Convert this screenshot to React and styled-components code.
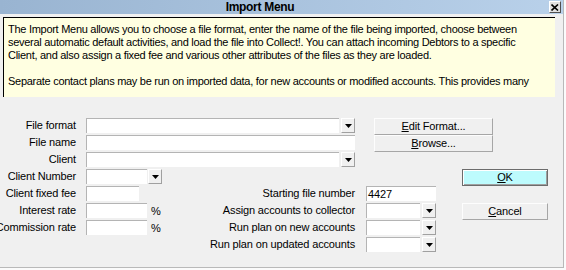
import React from "react";
import styled, { createGlobalStyle } from "styled-components";

const Global = createGlobalStyle`
  html, body { margin: 0; padding: 0; background: #fbfbfb; }
  body { font-family: "Liberation Sans", Arial, sans-serif; font-size: 11px; color: #000; }
`;

const Window = styled.div`
  width: 563px;
  height: 267px;
  background: #f0f0f0;
  border-right: 1px solid #b9b9b9;
  border-bottom: 1px solid #b9b9b9;
  display: flex;
  flex-direction: column;
  overflow: hidden;
`;

const TitleBar = styled.div`
  height: 14px;
  flex: none;
  display: flex;
  align-items: center;
  background: linear-gradient(to right, #99b4d1, #b9d1ea);
  padding-right: 2px;
`;

const Title = styled.div`
  flex: 1;
  text-align: center;
  font-weight: bold;
  font-size: 12px;
  letter-spacing: -0.3px;
  line-height: 14px;
  padding-right: 29px;
`;

const CloseBtn = styled.div`
  width: 10px;
  height: 10px;
  background: #e0e0e0;
  border: 1px solid;
  border-color: #fff #505050 #505050 #fff;
  display: flex;
  align-items: center;
  justify-content: center;
`;

const Info = styled.div`
  margin: 3px 0 0 3px;
  width: 552px;
  height: 80px;
  flex: none;
  background: #ffffe1;
  border-left: 1px solid #000;
  border-top: 1px solid #000;
  padding: 5px 0 0 4px;
  box-sizing: border-box;
  line-height: 13px;
  letter-spacing: -0.28px;
  overflow: hidden;
`;

const Para = styled.p`
  margin: 0 0 13px 0;
  white-space: nowrap;
`;

const Form = styled.div`
  margin-top: 21px;
  display: grid;
  grid-template-columns: 76px 10px 84px 185px 11px 70px 26px 86px;
  grid-auto-rows: 15px;
  row-gap: 2px;
  align-items: center;
  letter-spacing: -0.15px;
`;

const Label = styled.div`
  grid-column: ${(p) => p.$col || 1};
  grid-row: ${(p) => p.$row};
  text-align: right;
  white-space: nowrap;
  justify-self: end;
  line-height: 15px;
`;

const Field = styled.div`
  grid-column: ${(p) => p.$col};
  grid-row: ${(p) => p.$row};
  width: ${(p) => (p.$w ? p.$w + "px" : "auto")};
  height: 15px;
  box-sizing: border-box;
  background: #fff;
  border-top: 1px solid #b4b4b4;
  border-left: 1px solid #b4b4b4;
  padding-left: 1px;
  line-height: 14px;
  align-self: start;
`;

const Combo = styled.div`
  grid-column: ${(p) => p.$col};
  grid-row: ${(p) => p.$row};
  width: ${(p) => (p.$w ? p.$w + "px" : "auto")};
  height: 15px;
  display: flex;
  gap: ${(p) => p.$gap ?? 2}px;
  align-self: start;
`;

const ComboField = styled.div`
  flex: 1;
  background: #fff;
  border-top: 1px solid #b4b4b4;
  border-left: 1px solid #b4b4b4;
`;

const DropBtn = styled.div`
  width: 14px;
  box-sizing: border-box;
  background: #f0f0f0;
  border: 1px solid;
  border-color: #fff #a0a0a0 #a0a0a0 #fff;
  display: flex;
  align-items: center;
  justify-content: center;
`;

const Percent = styled.div`
  grid-column: ${(p) => p.$col};
  grid-row: ${(p) => p.$row};
  display: flex;
  align-items: center;
  gap: 4px;
  align-self: start;
  height: 15px;
`;

const Button = styled.div`
  grid-column: ${(p) => p.$col};
  grid-row: ${(p) => p.$row};
  margin-left: ${(p) => p.$ml || 0}px;
  width: ${(p) => p.$w}px;
  height: 17px;
  box-sizing: border-box;
  align-self: start;
  background: ${(p) => (p.$default ? "#bdfbfd" : "#f0f0f0")};
  border: 1px solid;
  border-color: ${(p) =>
    p.$default ? "#6c6c6c" : "#fdfdfd #a6a6a6 #a6a6a6 #fdfdfd"};
  box-shadow: ${(p) =>
    p.$default ? "inset 1px 1px #fff, inset -1px -1px #a0a0a0" : "none"};
  text-align: center;
  line-height: 15px;
  z-index: 1;
`;

const Down = () => (
  <svg width="7" height="4" viewBox="0 0 7 4">
    <path d="M0 0H7L3.5 4Z" fill="#000" />
  </svg>
);

const X = () => (
  <svg width="8" height="7" viewBox="0 0 8 7">
    <path d="M0.5 0.5L7 6.5M7 0.5L0.5 6.5" stroke="#000" strokeWidth="1.6" />
  </svg>
);

export default function App() {
  return (
    <>
      <Global />
      <Window>
        <TitleBar>
          <Title>Import Menu</Title>
          <CloseBtn>
            <X />
          </CloseBtn>
        </TitleBar>
        <Info>
          <Para>
            The Import Menu allows you to choose a file format, enter the name of the file being imported, choose between
            <br />
            several automatic default activities, and load the file into Collect!. You can attach incoming Debtors to a specific
            <br />
            Client, and also assign a fixed fee and various other attributes of the files as they are loaded.
          </Para>
          <Para>
            Separate contact plans may be run on imported data, for new accounts or modified accounts. This provides many
          </Para>
        </Info>
        <Form>
          <Label $row={1}>File format</Label>
          <Combo $row={1} $col="3 / 5">
            <ComboField />
            <DropBtn><Down /></DropBtn>
          </Combo>
          <Button $row={1} $col="6 / 9" $ml={8} $w={119}>
            <u>E</u>dit Format...
          </Button>

          <Label $row={2}>File name</Label>
          <Field $row={2} $col="3 / 5" />
          <Button $row={2} $col="6 / 9" $ml={8} $w={119}>
            <u>B</u>rowse...
          </Button>

          <Label $row={3}>Client</Label>
          <Combo $row={3} $col="3 / 5">
            <ComboField />
            <DropBtn><Down /></DropBtn>
          </Combo>

          <Label $row={4}>Client Number</Label>
          <Combo $row={4} $col="3" $w={76} $gap={1}>
            <ComboField />
            <DropBtn><Down /></DropBtn>
          </Combo>
          <Button $row={4} $col="8" $w={86} $default>
            <u>O</u>K
          </Button>

          <Label $row={5}>Client fixed fee</Label>
          <Field $row={5} $col="3" $w={53} />
          <Label $row={5} $col="4">Starting file number</Label>
          <Field $row={5} $col="6">4427</Field>

          <Label $row={6}>Interest rate</Label>
          <Percent $row={6} $col="3">
            <Field $w={61} />%
          </Percent>
          <Label $row={6} $col="4">Assign accounts to collector</Label>
          <Combo $row={6} $col="6">
            <ComboField />
            <DropBtn><Down /></DropBtn>
          </Combo>
          <Button $row={6} $col="8" $w={86}>
            <u>C</u>ancel
          </Button>

          <Label $row={7}>Commission rate</Label>
          <Percent $row={7} $col="3">
            <Field $w={61} />%
          </Percent>
          <Label $row={7} $col="4">Run plan on new accounts</Label>
          <Combo $row={7} $col="6">
            <ComboField />
            <DropBtn><Down /></DropBtn>
          </Combo>

          <Label $row={8} $col="4">Run plan on updated accounts</Label>
          <Combo $row={8} $col="6">
            <ComboField />
            <DropBtn><Down /></DropBtn>
          </Combo>
        </Form>
      </Window>
    </>
  );
}
